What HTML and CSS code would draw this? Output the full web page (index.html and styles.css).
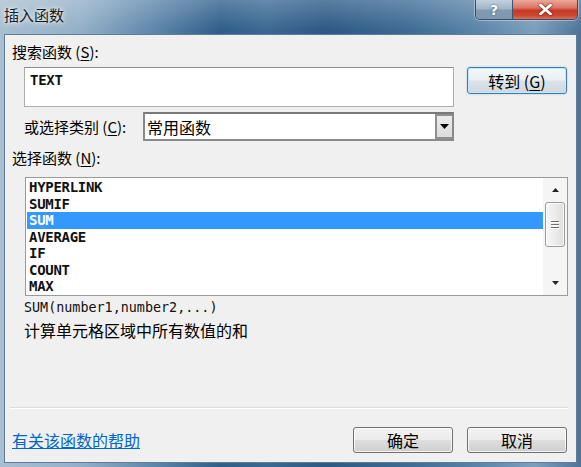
FILE: index.html
```
<!DOCTYPE html>
<html lang="zh-CN">
<head>
<meta charset="utf-8">
<title>插入函数</title>
<link rel="stylesheet" href="styles.css">
</head>
<body>
<div class="window">
  <div class="titlebar">
    <span class="title">插入函数</span>
    <div class="caption-btns">
      <div class="cbtn help">?</div>
      <div class="cbtn close">
        <svg width="13" height="11" viewBox="0 0 13 11"><path d="M1.5 1 L11.5 10 M11.5 1 L1.5 10" stroke="#fff" stroke-width="2.6" stroke-linecap="square" fill="none"/></svg>
      </div>
    </div>
  </div>
  <div class="client">
    <div class="lbl l-search">搜索函数 (<u>S</u>):</div>
    <div class="search-row">
      <div class="textbox">TEXT</div>
      <div class="btn go">转到 (<u>G</u>)</div>
    </div>
    <div class="cat-row">
      <span class="cat-lbl">或选择类别 (<u>C</u>):</span>
      <div class="select">
        <span class="sel-text">常用函数</span>
        <span class="sel-btn"><svg width="9" height="5" viewBox="0 0 9 5"><path d="M0 0 L9 0 L4.5 5 Z" fill="#000"/></svg></span>
      </div>
    </div>
    <div class="lbl l-fn">选择函数 (<u>N</u>):</div>
    <div class="listbox">
      <ul class="items">
        <li>HYPERLINK</li>
        <li>SUMIF</li>
        <li class="sel">SUM</li>
        <li>AVERAGE</li>
        <li>IF</li>
        <li>COUNT</li>
        <li>MAX</li>
      </ul>
      <div class="scrollbar">
        <div class="sb-arrow"><svg width="7" height="4" viewBox="0 0 7 4"><path d="M0 4 L3.5 0 L7 4 Z" fill="#222"/></svg></div>
        <div class="sb-thumb"><span></span><span></span><span></span></div>
        <div class="sb-space"></div>
        <div class="sb-arrow"><svg width="7" height="4" viewBox="0 0 7 4"><path d="M0 0 L7 0 L3.5 4 Z" fill="#222"/></svg></div>
      </div>
    </div>
    <div class="syntax">SUM(number1,number2,...)</div>
    <div class="desc">计算单元格区域中所有数值的和</div>
    <div class="footer">
      <div class="sep"></div>
      <div class="actions">
        <a class="link" href="#">有关该函数的帮助</a>
        <div class="btns">
          <div class="btn">确定</div>
          <div class="btn">取消</div>
        </div>
      </div>
    </div>
  </div>
</div>
</body>
</html>
```
FILE: styles.css
```
* { box-sizing: border-box; }
html, body { margin: 0; padding: 0; }
body {
  width: 581px;
  height: 467px;
  overflow: hidden;
  font-family: "Noto Sans CJK SC", "Noto Sans", sans-serif;
  color: #000;
}
.window {
  width: 581px;
  height: 467px;
  display: flex;
  flex-direction: column;
  background:
    linear-gradient(180deg, rgba(255,255,255,0.22) 0px, rgba(255,255,255,0) 30px),
    linear-gradient(90deg, #a9bfd1 0%, #93afc7 14%, #5f88ac 26%, #2f5e8a 38%, #3a6993 46%, #2c5985 56%, #3d6b94 70%, #5a84a8 82%, #7c9fbd 92%, #4d7398 100%);
}
.titlebar {
  height: 34px;
  display: flex;
  justify-content: space-between;
  align-items: flex-start;
  padding: 0 3px 0 4px;
}
.title {
  margin-top: 5px;
  font-size: 15px;
  line-height: 20px;
  color: #1a1a1a;
  text-shadow: 0 0 6px rgba(255,255,255,0.9), 0 0 3px rgba(255,255,255,0.8);
}
.caption-btns {
  display: flex;
  height: 20px;
  border: 1px solid #34506b;
  border-top: none;
  border-radius: 0 0 5px 5px;
  overflow: hidden;
  box-shadow: 0 0 0 1px rgba(255,255,255,0.35);
}
.cbtn {
  height: 19px;
  display: flex;
  align-items: center;
  justify-content: center;
}
.help {
  width: 37px;
  border-right: 1px solid #3d5670;
  background: linear-gradient(180deg, #c2d1de 0%, #a3b7c9 45%, #8199b1 55%, #7f98b0 100%);
  color: #fff;
  font-family: "DejaVu Sans", sans-serif;
  font-weight: bold;
  font-size: 14px;
  text-shadow: 0 0 2px #2b4560;
}
.close {
  width: 64px;
  background: linear-gradient(180deg, #eaa99b 0%, #dc7665 40%, #c63a26 55%, #cb4531 80%, #da6e58 100%);
}
.close svg { filter: drop-shadow(0 0 1px #5a1208); }

.client {
  flex: 1;
  margin: 0 4px 4px 4px;
  background: #f0f0f0;
  border: 1px solid #5f7c98;
  display: flex;
  flex-direction: column;
  font-size: 15px;
}
.lbl {
  height: 18px;
  line-height: 18px;
  margin-left: 7px;
}
.l-search { margin-top: 8px; }
.l-fn { margin-top: 8px; }
u { text-decoration: underline; text-underline-offset: 2px; }

.search-row {
  display: flex;
  margin-top: 6px;
  margin-left: 19px;
  align-items: flex-start;
}
.textbox {
  width: 430px;
  height: 40px;
  background: #fff;
  border: 1px solid #abadb3;
  border-top-color: #8e8f8f;
  padding: 4px 5px;
  font-family: "DejaVu Sans Mono", monospace;
  font-weight: bold;
  font-size: 14px;
  line-height: 16px;
  letter-spacing: -0.3px;
  color: #111;
}
.btn {
  width: 100px;
  height: 27px;
  border: 1px solid #707070;
  border-radius: 3px;
  background: linear-gradient(180deg, #f2f2f2 0%, #ebebeb 48%, #dddddd 52%, #cfcfcf 100%);
  box-shadow: inset 0 0 0 1px rgba(255,255,255,0.75);
  display: flex;
  align-items: center;
  justify-content: center;
  font-size: 16px;
  line-height: 20px;
  color: #000;
}
.go {
  margin-left: 13px;
  border-color: #3c7fb1;
  box-shadow: inset 0 0 0 1px #c2e6fa, 0 0 2px rgba(60,127,177,0.4);
  background: linear-gradient(180deg, #f4f8fb 0%, #e9eff4 48%, #dbe3ea 52%, #cfd8e0 100%);
}

.cat-row {
  display: flex;
  align-items: center;
  height: 29px;
  margin-top: 5px;
  margin-left: 19px;
}
.cat-lbl { width: 119px; white-space: nowrap; }
.select {
  width: 311px;
  height: 29px;
  background: #fff;
  border: 2px solid #8a8a8a;
  border-top-color: #7a7a7a;
  display: flex;
  align-items: center;
  justify-content: space-between;
  padding: 0 0 0 2px;
}
.sel-text { font-size: 16px; line-height: 20px; }
.sel-btn {
  width: 17px;
  height: 25px;
  border: 2px solid #8f8f8f;
  border-right: none;
  background: linear-gradient(180deg, #ececec, #dcdcdc);
  display: flex;
  align-items: center;
  justify-content: center;
}

.listbox {
  margin-top: 10px;
  margin-left: 20px;
  width: 543px;
  height: 119px;
  border: 1px solid #9a9a9a;
  background: #fff;
  display: flex;
  padding: 1px 0 0 1px;
}
.items {
  list-style: none;
  margin: 0;
  padding: 0;
  width: 516px;
}
.items li {
  height: 16.5px;
  line-height: 16.5px;
  padding-left: 2px;
  font-family: "DejaVu Sans Mono", monospace;
  font-weight: bold;
  font-size: 14px;
  letter-spacing: -0.3px;
  color: #111;
}
.items li.sel {
  background: #3399ff;
  color: #fff;
}
.scrollbar {
  width: 24px;
  margin-top: -1px;
  background: #f5f5f5;
  display: flex;
  flex-direction: column;
  align-items: center;
}
.sb-arrow {
  height: 24px;
  width: 100%;
  display: flex;
  align-items: center;
  justify-content: center;
}
.sb-thumb {
  width: 20px;
  height: 45px;
  border: 1px solid #9b9b9b;
  border-radius: 3px;
  background: linear-gradient(90deg, #f7f7f7 0%, #ececec 50%, #dedede 100%);
  box-shadow: inset 0 0 0 1px rgba(255,255,255,0.8);
  display: flex;
  flex-direction: column;
  align-items: center;
  justify-content: center;
  gap: 2px;
}
.sb-thumb span {
  width: 8px;
  height: 1px;
  background: #6f6f6f;
  box-shadow: 0 1px 0 #fff;
}
.sb-space { flex: 1; }

.syntax {
  margin-top: 4px;
  margin-left: 19px;
  height: 16px;
  line-height: 16px;
  font-family: "DejaVu Sans Mono", monospace;
  font-size: 13.4px;
  color: #111;
}
.desc {
  margin-top: 4px;
  margin-left: 19px;
  height: 20px;
  line-height: 20px;
  font-size: 16px;
}
.footer {
  margin-top: auto;
}
.sep {
  margin-left: 5px;
  width: 558px;
  height: 2px;
  border-top: 1px solid #dcdcdc;
  border-bottom: 1px solid #ffffff;
}
.actions {
  display: flex;
  justify-content: space-between;
  align-items: center;
  height: 26px;
  margin-top: 18px;
  margin-bottom: 9px;
}
.link {
  margin-left: 7px;
  font-size: 16px;
  line-height: 20px;
  color: #0066cc;
  text-decoration: underline;
}
.btns {
  display: flex;
  gap: 14px;
  margin-right: 9px;
}
.btns .btn { height: 26px; }
```
